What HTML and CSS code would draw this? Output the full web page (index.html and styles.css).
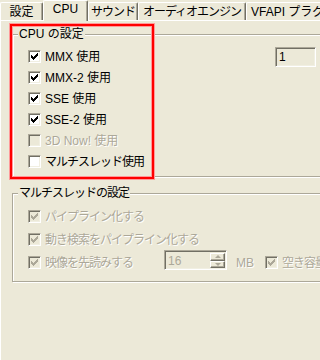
FILE: index.html
```html
<!DOCTYPE html>
<html lang="ja">
<head>
<meta charset="UTF-8">
<title>CPU の設定</title>
<link rel="stylesheet" href="styles.css">
</head>
<body>
  <div class="tabs">
    <div class="tab tab-general">設定</div>
    <div class="tab tab-cpu active">CPU</div>
    <div class="tab tab-sound narrow">サウンド</div>
    <div class="tab tab-audio narrow">オーディオエンジン</div>
    <div class="tab tab-vfapi">VFAPI プラグイン</div>
  </div>

  <div class="panel">
    <div class="group group-cpu">
      <div class="group-title">CPU の設定</div>
      <div class="group-body">
        <div class="checks">
          <div class="check"><span class="box checked"><svg viewBox="0 0 7 7"><path d="M6 0h1v1h-1zM5 1h2v1h-2zM0 2h1v1h-1zM4 2h3v1h-3zM0 3h2v1h-2zM3 3h3v1h-3zM0 4h5v1h-5zM1 5h3v1h-3zM2 6h1v1h-1z"/></svg></span>MMX 使用</div>
          <div class="check"><span class="box checked"><svg viewBox="0 0 7 7"><path d="M6 0h1v1h-1zM5 1h2v1h-2zM0 2h1v1h-1zM4 2h3v1h-3zM0 3h2v1h-2zM3 3h3v1h-3zM0 4h5v1h-5zM1 5h3v1h-3zM2 6h1v1h-1z"/></svg></span>MMX-2 使用</div>
          <div class="check"><span class="box checked"><svg viewBox="0 0 7 7"><path d="M6 0h1v1h-1zM5 1h2v1h-2zM0 2h1v1h-1zM4 2h3v1h-3zM0 3h2v1h-2zM3 3h3v1h-3zM0 4h5v1h-5zM1 5h3v1h-3zM2 6h1v1h-1z"/></svg></span>SSE 使用</div>
          <div class="check"><span class="box checked"><svg viewBox="0 0 7 7"><path d="M6 0h1v1h-1zM5 1h2v1h-2zM0 2h1v1h-1zM4 2h3v1h-3zM0 3h2v1h-2zM3 3h3v1h-3zM0 4h5v1h-5zM1 5h3v1h-3zM2 6h1v1h-1z"/></svg></span>SSE-2 使用</div>
          <div class="check disabled"><span class="box"></span>3D Now! 使用</div>
          <div class="check narrow"><span class="box"></span>マルチスレッド使用</div>
        </div>
        <div class="field">1</div>
      </div>
    </div>

    <div class="group group-thread disabled">
      <div class="group-title narrow">マルチスレッドの設定</div>
      <div class="group-body">
        <div class="checks">
          <div class="check narrow"><span class="box checked"><svg viewBox="0 0 7 7"><path d="M6 0h1v1h-1zM5 1h2v1h-2zM0 2h1v1h-1zM4 2h3v1h-3zM0 3h2v1h-2zM3 3h3v1h-3zM0 4h5v1h-5zM1 5h3v1h-3zM2 6h1v1h-1z"/></svg></span>パイプライン化する</div>
          <div class="check narrow"><span class="box checked"><svg viewBox="0 0 7 7"><path d="M6 0h1v1h-1zM5 1h2v1h-2zM0 2h1v1h-1zM4 2h3v1h-3zM0 3h2v1h-2zM3 3h3v1h-3zM0 4h5v1h-5zM1 5h3v1h-3zM2 6h1v1h-1z"/></svg></span>動き検索をパイプライン化する</div>
          <div class="row">
            <div class="check check-wide narrow"><span class="box checked"><svg viewBox="0 0 7 7"><path d="M6 0h1v1h-1zM5 1h2v1h-2zM0 2h1v1h-1zM4 2h3v1h-3zM0 3h2v1h-2zM3 3h3v1h-3zM0 4h5v1h-5zM1 5h3v1h-3zM2 6h1v1h-1z"/></svg></span>映像を先読みする</div>
            <div class="spin">
              <span class="spin-value">16</span>
              <span class="spin-buttons">
                <span class="spin-btn up"></span>
                <span class="spin-btn down"></span>
              </span>
            </div>
            <span class="unit">MB</span>
            <div class="check narrow"><span class="box checked"><svg viewBox="0 0 7 7"><path d="M6 0h1v1h-1zM5 1h2v1h-2zM0 2h1v1h-1zM4 2h3v1h-3zM0 3h2v1h-2zM3 3h3v1h-3zM0 4h5v1h-5zM1 5h3v1h-3zM2 6h1v1h-1z"/></svg></span>空き容量</div>
          </div>
        </div>
      </div>
    </div>
  </div>

  <div class="highlight"></div>
</body>
</html>
```

FILE: styles.css
```css
* {
  box-sizing: border-box;
}
body {
  margin: 0;
  width: 320px;
  height: 360px;
  overflow: hidden;
  position: relative;
  background: #ece9d8;
  font-family: "Liberation Sans", "Noto Sans CJK JP", sans-serif;
  font-size: 12px;
  line-height: 14px;
  color: #000;
}
.narrow {
  letter-spacing: -1px;
}

/* tab strip */
.tabs {
  display: flex;
  height: 20px;
  white-space: nowrap;
  position: relative;
  z-index: 1;
}
.tab {
  flex: none;
  height: 18px;
  margin-top: 2px;
  padding-top: 2px;
  text-align: center;
  background: #ece9d8;
  border-top: 1px solid #fff;
  border-left: 1px solid #fff;
  border-right: 1px solid #716f64;
  border-radius: 2px 2px 0 0;
  box-shadow: inset -1px 0 #aca899;
}
.tab.active {
  height: 21px;
  margin-top: 0;
  padding-top: 1px;
}
.tab-general { width: 43px; }
.tab-cpu { width: 45px; }
.tab-sound { width: 50px; }
.tab-audio { width: 108px; }
.tab-vfapi { width: 100px; text-align: left; padding-left: 4px; }

/* panel */
.panel {
  height: 340px;
  border-top: 1px solid #fff;
  border-left: 1px solid #fff;
  padding: 13px 0 0 11px;
}

.group {
  width: 330px;
  border: 1px solid #aca899;
  box-shadow: inset 1px 1px #fff, 1px 1px #fff;
}
.group-title {
  width: max-content;
  margin: -8px 0 0 5px;
  padding: 0 1px;
  background: #ece9d8;
}
.group-body {
  display: flex;
  align-items: flex-start;
  padding-left: 15px;
}
.group-cpu .group-body {
  padding-top: 5px;
  padding-bottom: 4px;
}
.group-thread {
  margin-top: 16px;
}
.group-thread .group-body {
  padding-top: 5px;
  padding-bottom: 7px;
}
.checks {
  flex: 1;
}

.check {
  display: flex;
  align-items: center;
  gap: 4px;
  height: 21px;
  white-space: nowrap;
}
.group-thread .check {
  height: 23px;
}
.row {
  display: flex;
  align-items: center;
  height: 23px;
}
.check-wide {
  width: 136px;
}

.box {
  flex: none;
  width: 13px;
  height: 13px;
  padding: 2px;
  background: #fff;
  border: 1px solid;
  border-color: #aca899 #fff #fff #aca899;
  box-shadow: inset 1px 1px #716f64, inset -1px -1px #f1efe2;
}
.box svg {
  display: block;
  width: 7px;
  height: 7px;
  fill: #000;
  shape-rendering: crispEdges;
}

.disabled .check,
.check.disabled {
  color: #aca899;
  text-shadow: 1px 1px 0 #fff;
}
.disabled .box,
.check.disabled .box {
  background: #ece9d8;
}
.disabled .box svg {
  fill: #aca899;
}

.field {
  width: 41px;
  height: 20px;
  margin: 1px 25px 0 0;
  padding: 2px 0 0 3px;
  border: 1px solid;
  border-color: #aca899 #fff #fff #aca899;
  box-shadow: inset 1px 1px #716f64, inset -1px -1px #f1efe2;
}

/* spin box */
.spin {
  display: flex;
  align-self: flex-start;
  width: 63px;
  height: 20px;
  margin-top: -1px;
  padding: 2px 1px 1px 2px;
  border: 1px solid;
  border-color: #aca899 #fff #fff #aca899;
  box-shadow: inset 1px 1px #716f64, inset -1px -1px #f1efe2;
}
.spin-value {
  flex: 1;
  padding: 1px 0 0 1px;
  color: #aca899;
}
.spin-buttons {
  display: flex;
  flex-direction: column;
  width: 15px;
}
.spin-btn {
  flex: 1;
  display: flex;
  align-items: center;
  justify-content: center;
  border: 1px solid;
  border-color: #fff #716f64 #716f64 #fff;
  box-shadow: inset -1px -1px #aca899;
}
.spin-btn::before {
  content: "";
  border-left: 3px solid transparent;
  border-right: 3px solid transparent;
}
.spin-btn.up::before {
  border-bottom: 3px solid #aca899;
}
.spin-btn.down::before {
  border-top: 3px solid #aca899;
}
.unit {
  flex: none;
  width: 38px;
  padding-left: 9px;
  color: #aca899;
  text-shadow: 1px 1px 0 #fff;
}

/* red annotation frame */
.highlight {
  position: absolute;
  left: 10px;
  top: 24px;
  width: 144px;
  height: 155px;
  border: 2px solid #f00;
  box-shadow: 0 0 0 1px #ff9a9a, inset 0 0 0 1px #ff9a9a;
}
```
